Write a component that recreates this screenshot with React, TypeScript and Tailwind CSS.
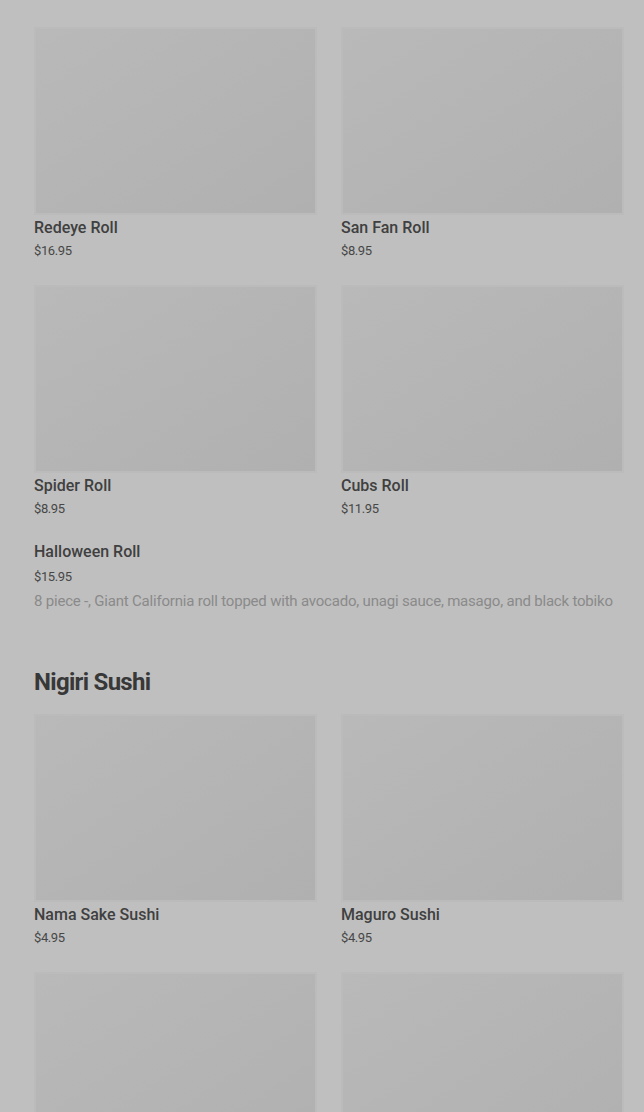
import React from "react";

type Item = { name: string; price: string };

const rolls: Item[] = [
  { name: "Redeye Roll", price: "$16.95" },
  { name: "San Fan Roll", price: "$8.95" },
  { name: "Spider Roll", price: "$8.95" },
  { name: "Cubs Roll", price: "$11.95" },
];

const nigiri: Item[] = [
  { name: "Nama Sake Sushi", price: "$4.95" },
  { name: "Maguro Sushi", price: "$4.95" },
  { name: "Hamachi Sushi", price: "$4.95" },
  { name: "Saba Sushi", price: "$4.95" },
];

const MenuCard: React.FC<{ item: Item }> = ({ item }) => (
  <div className="flex flex-col">
    <div className="h-[188px] w-full border-2 border-[#bbbbbb] bg-gradient-to-br from-[#b9b9b9] to-[#b0b0b0]" />
    <p className="mt-[1px] text-[16px] leading-6 font-medium text-[#404040]">{item.name}</p>
    <p className="mt-[1px] text-[13px] leading-5 tracking-[-0.4px] text-[#474747]">{item.price}</p>
  </div>
);

export default function App() {
  return (
    <div
      className="h-[1112px] overflow-hidden bg-[#bfbfbf] pl-[34px] pr-[20px] pt-[27px]"
      style={{ fontFamily: "Roboto, 'Noto Sans', sans-serif" }}
    >
      <div className="grid grid-cols-2 gap-x-6 gap-y-6">
        {rolls.map((r) => (
          <MenuCard key={r.name} item={r} />
        ))}
      </div>

      <div className="mt-[21px] flex flex-col">
        <p className="text-[16px] leading-6 font-medium text-[#404040]">Halloween Roll</p>
        <p className="mt-[3px] text-[13px] leading-5 tracking-[-0.4px] text-[#474747]">$15.95</p>
        <p className="mt-[4px] text-[15px] leading-5 tracking-[-0.2px] text-[#8a8a8a]">
          8 piece -, Giant California roll topped with avocado, unagi sauce, masago, and black tobiko
        </p>
      </div>

      <h2 className="mt-[55px] mb-4 text-[24px] leading-8 font-bold tracking-[-0.7px] text-[#383838]">
        Nigiri Sushi
      </h2>

      <div className="grid grid-cols-2 gap-x-6 gap-y-6">
        {nigiri.map((r) => (
          <MenuCard key={r.name} item={r} />
        ))}
      </div>
    </div>
  );
}
